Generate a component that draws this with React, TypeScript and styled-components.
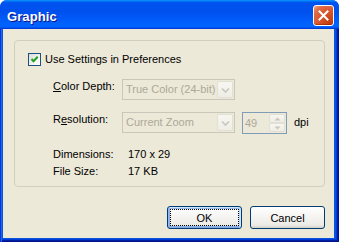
import React from "react";
import styled, { createGlobalStyle } from "styled-components";

const Global = createGlobalStyle`
  html, body { margin: 0; padding: 0; background: #ffffff; }
  body { font-family: "Liberation Sans", Arial, sans-serif; font-size: 11px; color: #000; }
  #root { width: 339px; height: 242px; }
`;

const Window = styled.div`
  width: 339px;
  height: 242px;
  display: flex;
  flex-direction: column;
  border-radius: 7px 7px 0 0;
  overflow: hidden;
  background: #0831d9;
`;

const TitleBar = styled.div`
  height: 29px;
  flex: none;
  display: flex;
  align-items: center;
  justify-content: space-between;
  padding: 0 5px 0 7px;
  box-sizing: border-box;
  background: linear-gradient(
    180deg,
    #0997ff 0%,
    #0053ee 9%,
    #0050ee 40%,
    #0063ff 86%,
    #0063ff 92%,
    #005bff 94%,
    #003dd7 97%,
    #003dd7 100%
  );
`;

const Title = styled.span`
  font-family: "Liberation Sans", Arial, sans-serif;
  font-weight: bold;
  font-size: 13px;
  line-height: 15px;
  color: #fff;
  padding-top: 3px;
  text-shadow: 1px 1px #0f1089;
  letter-spacing: 0.1px;
`;

const CloseButton = styled.div`
  width: 21px;
  height: 21px;
  box-sizing: border-box;
  border: 1px solid #fff;
  border-radius: 3px;
  margin-top: 2px;
  display: flex;
  align-items: center;
  justify-content: center;
  background: radial-gradient(circle at 85% 85%, #c33d11 0%, #d9532a 45%, #e06a44 75%, #f3a48a 100%);
  box-shadow: inset 0 -1px 1px rgba(120, 20, 0, 0.5);
`;

const Frame = styled.div`
  flex: 1;
  display: flex;
  padding: 0 5px 4px 3px;
  background: #0855dd;
  box-shadow: inset 1px 0 #0831d9, inset 2px 0 #166aee, inset -1px -1px #00138c,
    inset -2px -2px #001ea0, inset -3px -3px #003bda;
`;

const Body = styled.div`
  flex: 1;
  background: #ece9d8;
  display: flex;
  flex-direction: column;
  padding: 11px 9px 9px 11px;
`;

const GroupBox = styled.div`
  border: 1px solid #d0d0bf;
  border-radius: 4px;
  padding: 12px 0 8px 13px;
  display: flex;
  flex-direction: column;
`;

const CheckRow = styled.label`
  display: flex;
  align-items: flex-start;
  gap: 4px;
  height: 13px;
  line-height: 13px;
`;

const CheckBox = styled.span`
  width: 13px;
  height: 13px;
  box-sizing: border-box;
  border: 1px solid #1c5180;
  background: linear-gradient(135deg, #dcdcd7 0%, #f3f3ef 60%, #ffffff 100%);
  display: flex;
  align-items: center;
  justify-content: center;
  flex: none;
`;

const Settings = styled.div`
  margin-left: 25px;
  margin-top: 13px;
  display: flex;
  flex-direction: column;
  gap: 12px;
`;

const FieldRow = styled.div`
  display: grid;
  grid-template-columns: 69px auto;
  align-items: start;
`;

const Label = styled.span`
  line-height: 13px;
  padding-top: 1px;
  white-space: nowrap;
`;

const Key = styled.span`
  text-decoration: underline;
`;

const Controls = styled.div`
  display: flex;
  align-items: flex-start;
  gap: 7px;
`;

const Combo = styled.div<{ $w: number }>`
  width: ${(p) => p.$w}px;
  height: 21px;
  box-sizing: border-box;
  border: 1px solid #c9c7ba;
  background: #ece9d8;
  display: flex;
  align-items: center;
  justify-content: space-between;
  padding: 1px 1px 1px 3px;
`;

const DisabledText = styled.span`
  color: #aca899;
  line-height: 13px;
  white-space: nowrap;
`;

const DropButton = styled.div`
  width: 16px;
  height: 17px;
  box-sizing: border-box;
  border: 1px solid #e2e0d4;
  border-radius: 2px;
  background: linear-gradient(180deg, #f7f6f1 0%, #eeede6 100%);
  display: flex;
  align-items: center;
  justify-content: center;
`;

const Spinner = styled.div`
  width: 45px;
  height: 22px;
  box-sizing: border-box;
  border: 1px solid #7f9db9;
  background: #ece9d8;
  display: flex;
  align-items: center;
  justify-content: space-between;
  padding: 1px 1px 1px 2px;
`;

const SpinButtons = styled.div`
  width: 16px;
  height: 18px;
  display: flex;
  flex-direction: column;
  gap: 0;
`;

const SpinButton = styled.div`
  flex: 1;
  box-sizing: border-box;
  border: 1px solid #e2e0d4;
  border-radius: 2px;
  background: linear-gradient(180deg, #f7f6f1 0%, #eeede6 100%);
  display: flex;
  align-items: center;
  justify-content: center;
`;

const Unit = styled.span`
  line-height: 13px;
  padding-top: 4px;
`;

const InfoGrid = styled.div`
  margin-left: 25px;
  margin-top: 14px;
  display: grid;
  grid-template-columns: 75px auto;
  row-gap: 4px;
  line-height: 13px;
`;

const ButtonRow = styled.div`
  margin-top: 19px;
  display: flex;
  justify-content: flex-end;
  gap: 8px;
`;

const Button = styled.button<{ $default?: boolean }>`
  width: 75px;
  height: 23px;
  box-sizing: border-box;
  border: 1px solid #003c74;
  border-radius: 3px;
  background: linear-gradient(180deg, #ffffff 0%, #ecebe6 86%, #d6d0c5 100%);
  font-family: "Liberation Sans", Arial, sans-serif;
  font-size: 11px;
  color: #000;
  padding: 0;
  position: relative;
  ${(p) =>
    p.$default
      ? `box-shadow: inset -1px 1px #cee7ff, inset 1px 2px #98b8ea, inset -2px 2px #bcd4f6, inset 1px -1px #89ade4, inset 2px -2px #89ade4;
         outline: 1px dotted #000; outline-offset: -4px;`
      : ""}
`;

const Chevron = ({ dir = "down" }: { dir?: "down" | "up" }) => (
  <svg width="9" height="6" viewBox="0 0 9 6">
    {dir === "down" ? (
      <path d="M1 1.5 L4.5 5 L8 1.5" fill="none" stroke="#c9c7ba" strokeWidth="1.6" />
    ) : (
      <path d="M1 4.5 L4.5 1 L8 4.5" fill="none" stroke="#c9c7ba" strokeWidth="1.6" />
    )}
  </svg>
);

const Arrow = ({ up }: { up?: boolean }) => (
  <svg width="7" height="4" viewBox="0 0 7 4">
    {up ? (
      <path d="M0.5 3.5 L3.5 0.5 L6.5 3.5 Z" fill="#c9c7ba" />
    ) : (
      <path d="M0.5 0.5 L3.5 3.5 L6.5 0.5 Z" fill="#c9c7ba" />
    )}
  </svg>
);

export default function App() {
  return (
    <>
      <Global />
      <Window>
        <TitleBar>
          <Title>Graphic</Title>
          <CloseButton>
            <svg width="11" height="11" viewBox="0 0 11 11">
              <path d="M1.5 1.5 L9.5 9.5 M9.5 1.5 L1.5 9.5" stroke="#fff" strokeWidth="2" strokeLinecap="square" />
            </svg>
          </CloseButton>
        </TitleBar>
        <Frame>
          <Body>
            <GroupBox>
              <CheckRow>
                <CheckBox>
                  <svg width="9" height="9" viewBox="0 0 9 9">
                    <path d="M1.5 4 L3.5 6.2 L7.7 1.8" fill="none" stroke="#21a121" strokeWidth="2" />
                  </svg>
                </CheckBox>
                <span>Use Settings in Preferences</span>
              </CheckRow>
              <Settings>
                <FieldRow>
                  <Label>
                    <Key>C</Key>olor Depth:
                  </Label>
                  <Controls>
                    <Combo $w={113}>
                      <DisabledText>True Color (24-bit)</DisabledText>
                      <DropButton>
                        <Chevron />
                      </DropButton>
                    </Combo>
                  </Controls>
                </FieldRow>
                <FieldRow>
                  <Label>
                    R<Key>e</Key>solution:
                  </Label>
                  <Controls>
                    <Combo $w={113}>
                      <DisabledText>Current Zoom</DisabledText>
                      <DropButton>
                        <Chevron />
                      </DropButton>
                    </Combo>
                    <Spinner>
                      <DisabledText>49</DisabledText>
                      <SpinButtons>
                        <SpinButton>
                          <Arrow up />
                        </SpinButton>
                        <SpinButton>
                          <Arrow />
                        </SpinButton>
                      </SpinButtons>
                    </Spinner>
                    <Unit>dpi</Unit>
                  </Controls>
                </FieldRow>
              </Settings>
              <InfoGrid>
                <span>Dimensions:</span>
                <span>170 x 29</span>
                <span>File Size:</span>
                <span>17 KB</span>
              </InfoGrid>
            </GroupBox>
            <ButtonRow>
              <Button $default>OK</Button>
              <Button>Cancel</Button>
            </ButtonRow>
          </Body>
        </Frame>
      </Window>
    </>
  );
}
